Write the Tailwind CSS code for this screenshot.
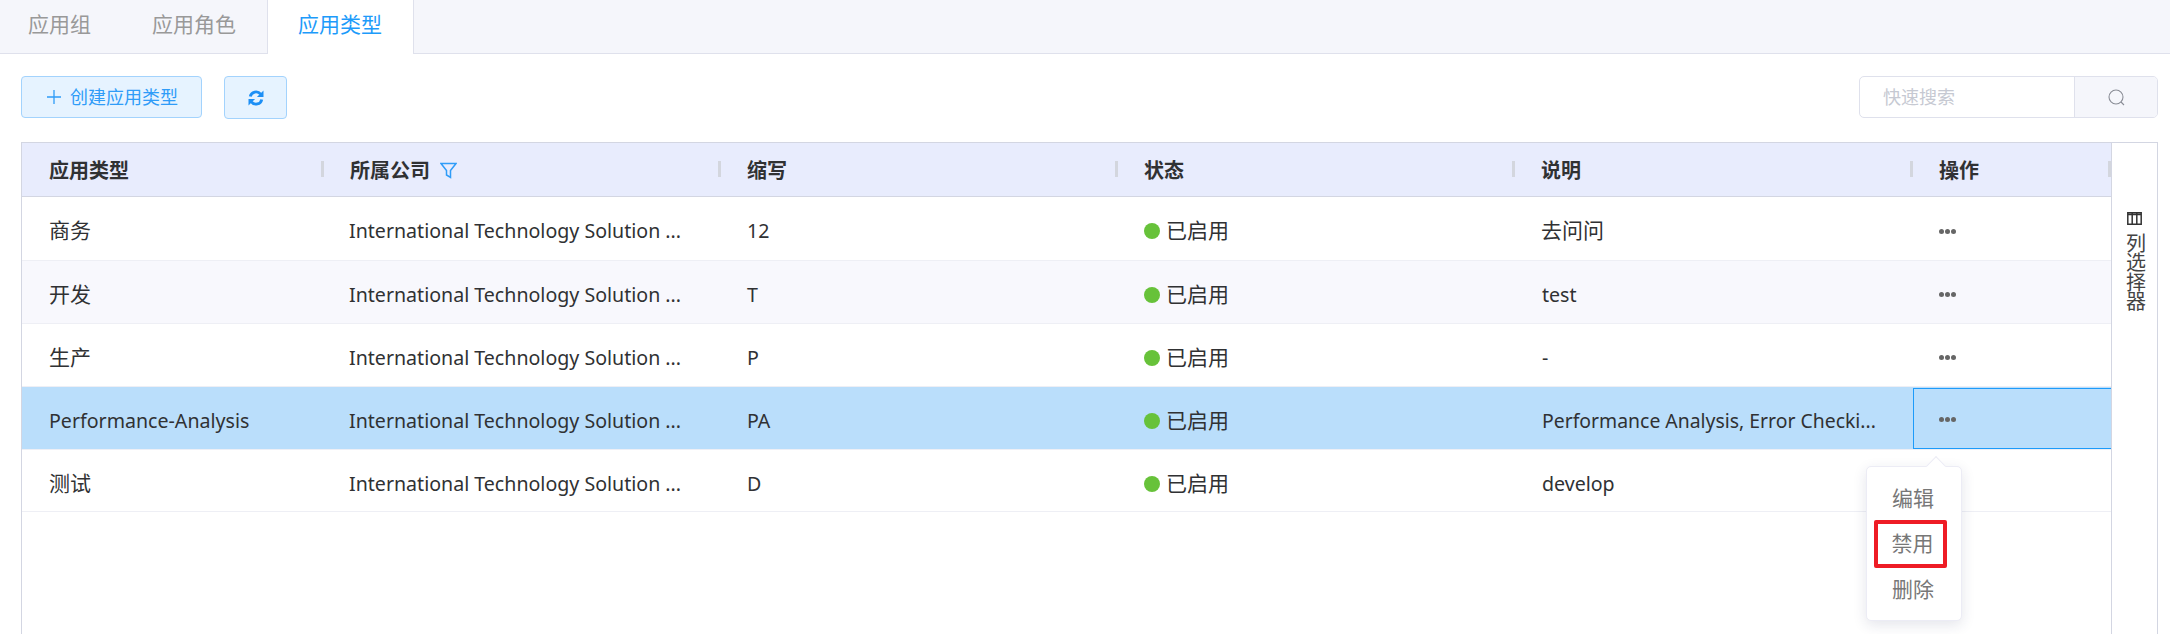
<!DOCTYPE html>
<html lang="zh">
<head>
    <meta charset="UTF-8">
    <title>应用类型</title>
    <script src="https://cdn.jsdelivr.net/npm/@tailwindcss/browser@4"></script>
</head>
<body class="bg-white font-['Noto_Sans','Noto_Sans_CJK_SC',sans-serif] h-[634px] overflow-hidden text-[19.6px] text-[#303133]">
    <!-- tabs -->
    <div class="flex h-[54px] bg-[#f5f6fb] border-b border-[#dfe1ec]">
        <div class="w-[124px] pl-[28px] pt-[9px] text-[21px] text-[#999]">应用组</div>
        <div class="w-[143px] pl-[28px] pt-[9px] text-[21px] text-[#999]">应用角色</div>
        <div class="w-[147px] h-[54px] pl-[30px] pt-[9px] text-[21px] text-[#1d9bfa] bg-white border-x border-[#dfe1ec]">应用类型</div>
    </div>

    <!-- toolbar -->
    <div class="flex items-start pl-[21px] pr-[12px] pt-[22px] h-[88px]">
        <button class="flex items-center w-[181px] h-[42px] pl-[24px] bg-[#e6f3ff] border border-[#a3d3fd] rounded-[4px] text-[18px] text-[#2f9cf8]">
            <svg class="w-[16px] h-[16px] mr-[8px]" viewBox="0 0 16 16" fill="none" stroke="currentColor" stroke-width="1.3"><path d="M8 1v14M1 8h14"/></svg>
            创建应用类型
        </button>
        <button class="flex items-center justify-center w-[63px] h-[43px] ml-[22px] bg-[#e6f3ff] border border-[#a3d3fd] rounded-[4px] text-[#1d8ff5]">
            <svg class="w-[18px] h-[16px]" viewBox="0 0 17 17" fill="none" stroke="currentColor" stroke-width="3"><path d="M2.400 7A6.200 6.200 0 0 1 13.400 4.400"/><path d="M14.600 10A6.200 6.200 0 0 1 3.600 12.600"/><path d="M16.500 .5v7h-7z" fill="currentColor" stroke="none"/><path d="M.5 16.500v-7h7z" fill="currentColor" stroke="none"/></svg>
        </button>
        <div class="flex ml-auto w-[299px] h-[42px] border border-[#dfe1ec] rounded-[5px] overflow-hidden">
            <div class="flex-1 pl-[23px] flex items-center text-[18px] text-[#c6c9d2]">快速搜索</div>
            <div class="w-[83px] flex items-center justify-center bg-[#f5f6fb] border-l border-[#dfe1ec] text-[#8a8d96]">
                <svg class="w-[17px] h-[17px]" viewBox="0 0 17 17" fill="none" stroke="currentColor" stroke-width="1.1"><circle cx="8" cy="8" r="7"/><path d="M13 13l3 3"/></svg>
            </div>
        </div>
    </div>

    <!-- table + column selector -->
    <div class="relative flex mx-[21px] mr-[12px] h-[492px] border border-[#d3d6e2] border-b-0">
        <div class="w-[2089px]">
            <div class="grid grid-cols-[302px_397px_397px_397px_398px_198px] h-[54px] pt-[2px] bg-[#e8ecfd] border-b border-[#d3d6e2] font-bold text-[20px] items-center">
                <div class="relative pl-[27px]">应用类型<i class="absolute right-0 top-[5px] w-[3px] h-[16px] bg-[#d3d6de]"></i></div>
                <div class="relative pl-[26px] flex items-center">所属公司
                    <svg class="w-[17px] h-[17px] ml-[10px] text-[#2f9cf8]" viewBox="0 0 17 17" fill="none" stroke="currentColor" stroke-width="1.5"><path d="M1 1.500h15L10.500 8.500v7l-4-2.500V8.500z"/></svg>
                    <i class="absolute right-0 top-[5px] w-[3px] h-[16px] bg-[#d3d6de]"></i></div>
                <div class="relative pl-[26px]">缩写<i class="absolute right-0 top-[5px] w-[3px] h-[16px] bg-[#d3d6de]"></i></div>
                <div class="relative pl-[26px]">状态<i class="absolute right-0 top-[5px] w-[3px] h-[16px] bg-[#d3d6de]"></i></div>
                <div class="relative pl-[26px]">说明<i class="absolute right-0 top-[5px] w-[3px] h-[16px] bg-[#d3d6de]"></i></div>
                <div class="relative pl-[26px]">操作<i class="absolute right-0 top-[5px] w-[3px] h-[16px] bg-[#d3d6de]"></i></div>
            </div>

            <div class="grid grid-cols-[302px_397px_397px_397px_398px_198px] h-[64px] pt-[5px] bg-white border-b border-[#eeeff5] items-center">
                <div class="pl-[27px] text-[21px]">商务</div><div class="pl-[25px]">International Technology Solution ...</div><div class="pl-[26px]">12</div>
                <div class="pl-[26px] flex items-center text-[21px]"><span class="w-[16px] h-[16px] rounded-full bg-[#67c23a] mr-[6px]"></span>已启用</div>
                <div class="pl-[26px] text-[21px]">去问问</div>
                <div class="pl-[26px] flex gap-[1px]"><b class="w-[5px] h-[5px] rounded-full bg-[#666]"></b><b class="w-[5px] h-[5px] rounded-full bg-[#666]"></b><b class="w-[5px] h-[5px] rounded-full bg-[#666]"></b></div>
            </div>
            <div class="grid grid-cols-[302px_397px_397px_397px_398px_198px] h-[63px] pt-[5px] bg-[#f8f8fd] border-b border-[#eeeff5] items-center">
                <div class="pl-[27px] text-[21px]">开发</div><div class="pl-[25px]">International Technology Solution ...</div><div class="pl-[26px]">T</div>
                <div class="pl-[26px] flex items-center text-[21px]"><span class="w-[16px] h-[16px] rounded-full bg-[#67c23a] mr-[6px]"></span>已启用</div>
                <div class="pl-[27px]">test</div>
                <div class="pl-[26px] flex gap-[1px]"><b class="w-[5px] h-[5px] rounded-full bg-[#666]"></b><b class="w-[5px] h-[5px] rounded-full bg-[#666]"></b><b class="w-[5px] h-[5px] rounded-full bg-[#666]"></b></div>
            </div>
            <div class="grid grid-cols-[302px_397px_397px_397px_398px_198px] h-[63px] pt-[5px] bg-white border-b border-[#eeeff5] items-center">
                <div class="pl-[27px] text-[21px]">生产</div><div class="pl-[25px]">International Technology Solution ...</div><div class="pl-[26px]">P</div>
                <div class="pl-[26px] flex items-center text-[21px]"><span class="w-[16px] h-[16px] rounded-full bg-[#67c23a] mr-[6px]"></span>已启用</div>
                <div class="pl-[27px]">-</div>
                <div class="pl-[26px] flex gap-[1px]"><b class="w-[5px] h-[5px] rounded-full bg-[#666]"></b><b class="w-[5px] h-[5px] rounded-full bg-[#666]"></b><b class="w-[5px] h-[5px] rounded-full bg-[#666]"></b></div>
            </div>
            <div class="grid grid-cols-[302px_397px_397px_397px_398px_198px] h-[63px] pt-[5px] bg-[#badefb] border-b border-[#eeeff5] items-center">
                <div class="pl-[27px]">Performance-Analysis</div><div class="pl-[25px]">International Technology Solution ...</div><div class="pl-[26px]">PA</div>
                <div class="pl-[26px] flex items-center text-[21px]"><span class="w-[16px] h-[16px] rounded-full bg-[#67c23a] mr-[6px]"></span>已启用</div>
                <div class="pl-[27px] whitespace-nowrap text-[19.4px]">Performance Analysis, Error Checki...</div>
                <div class="pl-[25px] pt-[3px] h-[61px] -mt-[5px] flex gap-[1px] items-center border border-[#1d9bfa] border-r-0"><b class="w-[5px] h-[5px] rounded-full bg-[#666]"></b><b class="w-[5px] h-[5px] rounded-full bg-[#666]"></b><b class="w-[5px] h-[5px] rounded-full bg-[#666]"></b></div>
            </div>
            <div class="grid grid-cols-[302px_397px_397px_397px_398px_198px] h-[62px] pt-[6px] bg-white border-b border-[#eeeff5] items-center">
                <div class="pl-[27px] text-[21px]">测试</div><div class="pl-[25px]">International Technology Solution ...</div><div class="pl-[26px]">D</div>
                <div class="pl-[26px] flex items-center text-[21px]"><span class="w-[16px] h-[16px] rounded-full bg-[#67c23a] mr-[6px]"></span>已启用</div>
                <div class="pl-[27px]">develop</div>
                <div></div>
            </div>
        </div>

        <!-- column selector -->
        <div class="flex-1 border-l border-[#d3d6e2] flex flex-col items-center pt-[69px] text-[#444]">
            <svg class="w-[15px] h-[13px] mb-[8px] text-[#333]" viewBox="0 0 15 13" fill="none" stroke="currentColor" stroke-width="1.5"><path d="M.8.8h13.400v11.400H.8zM5.200.8v11.400M9.800.8v11.400M.8 2.500h13.400"/></svg>
            <span class="[writing-mode:vertical-rl] text-[20px] leading-[24px] tracking-[-0.5px]">列选择器</span>
        </div>

        <!-- action menu -->
        <div class="absolute left-[1844px] top-[323px] w-[96px] h-[155px] bg-white border border-[#ececf5] rounded-[5px] shadow-[0_4px_14px_rgba(30,40,90,0.12)] text-[21px] text-[#777] flex flex-col items-center pt-[10px]">
            <i class="absolute left-[62px] -top-[8px] w-[14px] h-[14px] bg-white rotate-45 border-l border-t border-[#ececf5]"></i>
            <div class="h-[43px] flex items-center -ml-[2px]">编辑</div>
            <div class="w-[73px] h-[48px] -ml-[8px] pl-[5px] flex items-center justify-center border-[4px] border-[#ee1c25] rounded-[2px]">禁用</div>
            <div class="h-[43px] flex items-center -ml-[2px]">删除</div>
        </div>
    </div>
</body>
</html>
